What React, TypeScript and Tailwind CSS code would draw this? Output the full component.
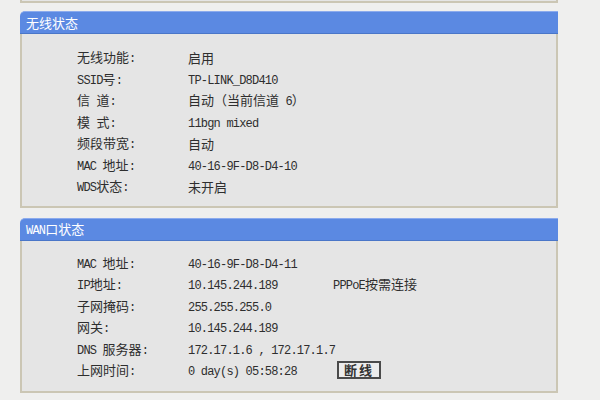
import React from 'react';

type Row = { label: string; value: string; extra?: React.ReactNode };

const wireless: Row[] = [
  { label: '无线功能:', value: '启用' },
  { label: 'SSID号:', value: 'TP-LINK_D8D410' },
  { label: '信 道:', value: '自动（当前信道 6）' },
  { label: '模 式:', value: '11bgn mixed' },
  { label: '频段带宽:', value: '自动' },
  { label: 'MAC 地址:', value: '40-16-9F-D8-D4-10' },
  { label: 'WDS状态:', value: '未开启' },
];

const wan: Row[] = [
  { label: 'MAC 地址:', value: '40-16-9F-D8-D4-11' },
  { label: 'IP地址:', value: '10.145.244.189', extra: <Mixed text="PPPoE按需连接" /> },
  { label: '子网掩码:', value: '255.255.255.0' },
  { label: '网关:', value: '10.145.244.189' },
  { label: 'DNS 服务器:', value: '172.17.1.6 , 172.17.1.7' },
  {
    label: '上网时间:',
    value: '0 day(s) 05:58:28',
    extra: (
      <button className="ml-[4px] h-[18px] w-[44px] border-2 border-[#4a4a4a] bg-[#ececec] text-[13px] font-bold tracking-[2px] text-[#333] leading-none font-['Noto_Sans_CJK_SC',sans-serif]">
        断线
      </button>
    ),
  },
];

// latin runs in a narrow mono face, han runs in the CJK face
function Mixed({ text }: { text: string }) {
  const parts = text.split(/([\u3000-\u9fff\uff00-\uffef]+)/).filter(Boolean);
  return (
    <span className="whitespace-pre">
      {parts.map((p, i) =>
        /[\u3000-\u9fff\uff00-\uffef]/.test(p) ? (
          <span key={i} className="font-['Noto_Sans_CJK_SC',sans-serif] text-[13px]">
            {p}
          </span>
        ) : (
          <span key={i} className="font-['Liberation_Mono',monospace] text-[12px] tracking-[-0.8px]">
            {p}
          </span>
        )
      )}
    </span>
  );
}

function Panel({ title, rows, pad }: { title: string; rows: Row[]; pad: string }) {
  return (
    <div>
      <div className="h-[23px] rounded-tl-[5px] bg-[#5b89e2] border-t border-[#8cabed] border-b border-b-[#4a76c8] flex items-center pl-[6px] text-white text-[12px]">
        <Mixed text={title} />
      </div>
      <div className={`bg-[#e5e5e5] border-l-2 border-r-2 border-b-2 border-[#cbc6b4] ${pad}`}>
        {rows.map((r) => (
          <div key={r.label} className="h-[21.5px] flex items-center text-[#2e2e2e] leading-none">
            <div className="w-[111px] pl-[55px] box-content">
              <Mixed text={r.label} />
            </div>
            <div className="w-[145px]">
              <Mixed text={r.value} />
            </div>
            <div>{r.extra}</div>
          </div>
        ))}
      </div>
    </div>
  );
}

export default function App() {
  return (
    <div className="w-[600px] h-[400px] overflow-hidden bg-[#efefee]">
      <div className="ml-[20px] w-[538px]">
        <div className="h-[3px] bg-[#e5e5e5] border-l-2 border-r-2 border-b-2 border-[#cbc6b4]" />
        <div className="mt-[8px]">
          <Panel title="无线状态" rows={wireless} pad="pt-[12px] pb-[9px]" />
        </div>
        <div className="mt-[10px]">
          <Panel title="WAN口状态" rows={wan} pad="pt-[11px] pb-[10px]" />
        </div>
      </div>
    </div>
  );
}
